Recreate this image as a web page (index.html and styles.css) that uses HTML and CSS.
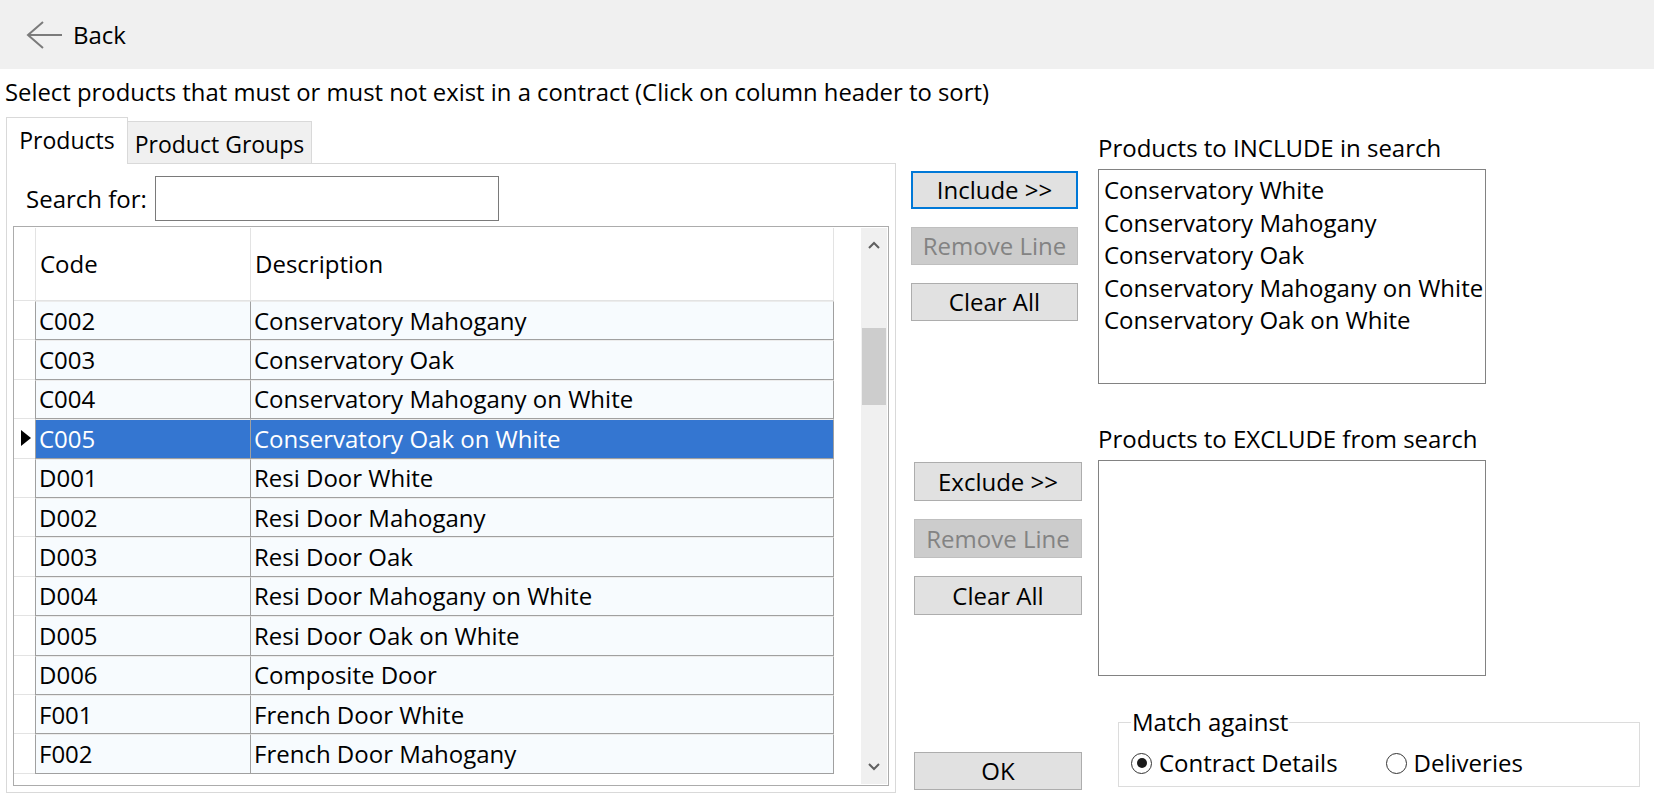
FILE: index.html
```html
<!DOCTYPE html>
<html lang="en">
<head>
<meta charset="utf-8">
<title>Product filter</title>
<link rel="stylesheet" href="styles.css">
</head>
<body>
<header class="topbar">
  <div class="back">
    <svg class="back-icon" width="40" height="30" viewBox="0 0 40 30"><path d="M2 15H36M17 2L2 15L17 28" fill="none" stroke="#7b7b7b" stroke-width="2"/></svg>
    <span>Back</span>
  </div>
</header>
<p class="intro">Select products that must or must not exist in a contract (Click on column header to sort)</p>
<div class="content">
  <section class="picker">
    <div class="tabs">
      <div class="tab active">Products</div>
      <div class="tab">Product Groups</div>
    </div>
    <div class="panel">
      <div class="search">
        <span class="search-label">Search for:</span>
        <div class="input"></div>
      </div>
      <div class="grid">
        <div class="grid-body">
          <div class="row head">
            <div class="rh"></div>
            <div class="hc">Code</div>
            <div class="hc last">Description</div>
          </div>
          <div class="row"><div class="rh"></div><div class="c">C002</div><div class="c last">Conservatory Mahogany</div></div>
          <div class="row"><div class="rh"></div><div class="c">C003</div><div class="c last">Conservatory Oak</div></div>
          <div class="row"><div class="rh"></div><div class="c">C004</div><div class="c last">Conservatory Mahogany on White</div></div>
          <div class="row selected"><div class="rh"><svg width="10" height="16" viewBox="0 0 10 16"><path d="M0 0L10 8L0 16Z" fill="#000"/></svg></div><div class="c">C005</div><div class="c last">Conservatory Oak on White</div></div>
          <div class="row"><div class="rh"></div><div class="c">D001</div><div class="c last">Resi Door White</div></div>
          <div class="row"><div class="rh"></div><div class="c">D002</div><div class="c last">Resi Door Mahogany</div></div>
          <div class="row"><div class="rh"></div><div class="c">D003</div><div class="c last">Resi Door Oak</div></div>
          <div class="row"><div class="rh"></div><div class="c">D004</div><div class="c last">Resi Door Mahogany on White</div></div>
          <div class="row"><div class="rh"></div><div class="c">D005</div><div class="c last">Resi Door Oak on White</div></div>
          <div class="row"><div class="rh"></div><div class="c">D006</div><div class="c last">Composite Door</div></div>
          <div class="row"><div class="rh"></div><div class="c">F001</div><div class="c last">French Door White</div></div>
          <div class="row"><div class="rh"></div><div class="c">F002</div><div class="c last">French Door Mahogany</div></div>
        </div>
        <div class="vscroll">
          <div class="sbtn"><svg width="12" height="8" viewBox="0 0 12 8"><path d="M1 7L6 2L11 7" fill="none" stroke="#606060" stroke-width="2"/></svg></div>
          <div class="thumb"></div>
          <div class="sbtn down"><svg width="12" height="8" viewBox="0 0 12 8"><path d="M1 1L6 6L11 1" fill="none" stroke="#606060" stroke-width="2"/></svg></div>
        </div>
      </div>
    </div>
  </section>

  <section class="side">
    <div class="xfer include">
      <div class="btns">
        <div class="btn focused">Include &gt;&gt;</div>
        <div class="btn disabled">Remove Line</div>
        <div class="btn">Clear All</div>
      </div>
      <div class="listcol">
        <div class="caption">Products to INCLUDE in search</div>
        <div class="listbox">
          <div class="item">Conservatory White</div>
          <div class="item">Conservatory Mahogany</div>
          <div class="item">Conservatory Oak</div>
          <div class="item">Conservatory Mahogany on White</div>
          <div class="item">Conservatory Oak on White</div>
        </div>
      </div>
    </div>

    <div class="xfer exclude">
      <div class="btns">
        <div class="btn">Exclude &gt;&gt;</div>
        <div class="btn disabled">Remove Line</div>
        <div class="btn">Clear All</div>
      </div>
      <div class="listcol">
        <div class="caption">Products to EXCLUDE from search</div>
        <div class="listbox"></div>
      </div>
    </div>

    <div class="footer">
      <div class="btn ok">OK</div>
      <fieldset class="match">
        <legend>Match against</legend>
        <div class="radios">
          <span class="radio"><span class="dot checked"></span>Contract Details</span>
          <span class="radio"><span class="dot"></span>Deliveries</span>
        </div>
      </fieldset>
    </div>
  </section>
</div>
</body>
</html>
```

FILE: styles.css
```css
html, body {
  margin: 0;
  padding: 0;
  background: #ffffff;
}

body {
  font-family: "Open Sans", "Noto Sans", sans-serif;
  font-size: 24px;
  color: #000;
  width: 1654px;
  height: 807px;
  overflow: hidden;
}

/* top bar */
.topbar {
  height: 69px;
  background: #f0f0f0;
  display: flex;
  align-items: center;
  padding-left: 26px;
  box-sizing: border-box;
}

.back {
  display: flex;
  align-items: center;
  gap: 7px;
  font-size: 24px;
}

.back-icon {
  display: block;
}

.intro {
  margin: 8px 0 0 5px;
  line-height: 30px;
  font-size: 23.85px;
  white-space: nowrap;
}

.content {
  display: flex;
  align-items: flex-start;
  margin-top: 10px;
}

/* left picker */
.picker {
  margin-left: 6px;
  width: 890px;
  flex: none;
}

.tabs {
  display: flex;
  align-items: flex-end;
  height: 46px;
  font-size: 23px;
}

.tab {
  box-sizing: border-box;
  border: 1px solid #d9d9d9;
  border-bottom: none;
  display: flex;
  align-items: center;
  justify-content: center;
  line-height: 30px;
  white-space: nowrap;
}

.tab.active {
  width: 122px;
  height: 47px;
  margin-bottom: -1px;
  background: #fff;
  position: relative;
  padding-bottom: 3px;
}

.tab:not(.active) {
  width: 184px;
  height: 42px;
  background: #f0f0f0;
  border-left: none;
  padding-top: 2px;
}

.panel {
  box-sizing: border-box;
  height: 630px;
  border: 1px solid #d9d9d9;
  background: #fff;
}

.search {
  display: grid;
  grid-template-columns: 129px 344px;
  align-items: center;
  margin-top: 12px;
  padding-left: 19px;
  height: 45px;
}

.search-label {
  white-space: nowrap;
}

.input {
  box-sizing: border-box;
  height: 45px;
  border: 1px solid #7a7a7a;
  background: #fff;
}

/* data grid */
.grid {
  box-sizing: border-box;
  margin: 5px 0 0 6px;
  width: 876px;
  height: 560px;
  border: 1px solid #acacac;
  display: flex;
  padding: 1px 1px 1px 0;
  background: #fff;
}

.grid-body {
  width: 847px;
  flex: none;
}

.row {
  display: grid;
  grid-template-columns: 21px 215px 584px;
  height: 39.4px;
}

.row.head {
  height: 73px;
}

.rh {
  box-sizing: border-box;
  border-bottom: 1px solid #e3e3e3;
  display: flex;
  align-items: center;
  justify-content: center;
  padding-left: 2px;
}

.hc {
  box-sizing: border-box;
  border-left: 1px solid #e3e3e3;
  border-bottom: 1px solid #e3e3e3;
  padding-left: 4px;
  display: flex;
  align-items: center;
  line-height: 30px;
  white-space: nowrap;
}

.hc.last {
  padding-left: 4px;
  border-right: 1px solid #e3e3e3;
}

.c {
  box-sizing: border-box;
  background: #f7fbfe;
  border-top: 1px solid #ececec;
  border-left: 1px solid #a0a0a0;
  border-bottom: 1px solid #a0a0a0;
  padding-left: 3px;
  display: flex;
  align-items: center;
  line-height: 30px;
  white-space: nowrap;
}

.c.last {
  padding-left: 3px;
  border-right: 1px solid #a0a0a0;
}

.row.selected .c {
  background: #3476d1;
  color: #fff;
}

.vscroll {
  width: 26px;
  flex: none;
  background: #f0f0f0;
  display: flex;
  flex-direction: column;
  align-items: center;
}

.sbtn {
  height: 34px;
  width: 26px;
  display: flex;
  align-items: center;
  justify-content: center;
}

.sbtn.down {
  margin-top: auto;
}

.thumb {
  margin-top: 66px;
  width: 24px;
  height: 77px;
  background: #cdcdcd;
}

/* right side */
.side {
  display: flex;
  flex-direction: column;
  flex: none;
}

.xfer {
  display: flex;
  align-items: flex-start;
}

.btns {
  display: flex;
  flex-direction: column;
  gap: 18px;
}

.include .btns {
  margin: 54px 0 0 15px;
  width: 167px;
}

.exclude .btns {
  margin: 78px 0 0 18px;
  width: 168px;
}

.btn {
  box-sizing: border-box;
  height: 38px;
  background: #e1e1e1;
  border: 1px solid #adadad;
  display: flex;
  align-items: center;
  justify-content: center;
  line-height: 30px;
  white-space: nowrap;
}

.exclude .btn {
  height: 39px;
}

.btn.focused {
  border: 2px solid #0078d7;
}

.btn.disabled {
  background: #cccccc;
  border-color: #bfbfbf;
  color: #838383;
}

.listcol {
  width: 388px;
}

.include .listcol {
  margin-left: 20px;
}

.exclude .listcol {
  margin-left: 16px;
}

.caption {
  line-height: 30px;
  white-space: nowrap;
}

.include .caption {
  margin-top: 16px;
}

.exclude .caption {
  margin-top: 40px;
}

.listbox {
  box-sizing: border-box;
  margin-top: 6px;
  border: 1px solid #828282;
  background: #fff;
  padding: 4px 0 0 5px;
  overflow: hidden;
}

.include .listbox {
  height: 215px;
}

.exclude .listbox {
  height: 216px;
}

.item {
  line-height: 32.5px;
  white-space: nowrap;
}

.footer {
  display: flex;
  align-items: flex-start;
}

.btn.ok {
  margin: 76px 0 0 18px;
  width: 168px;
}

.match {
  box-sizing: border-box;
  margin: 33px 0 0 36px;
  width: 522px;
  min-width: 0;
  padding: 0 12px 8px 12px;
  border: 1px solid #dcdcdc;
}

.match legend {
  padding: 0 1px;
  line-height: 26px;
}

.radios {
  display: flex;
  align-items: center;
  gap: 48px;
  margin-top: 13px;
  line-height: 30px;
}

.radio {
  display: inline-flex;
  align-items: center;
  gap: 7px;
  white-space: nowrap;
}

.dot {
  box-sizing: border-box;
  width: 21px;
  height: 21px;
  border: 1.5px solid #333;
  border-radius: 50%;
  display: inline-flex;
  align-items: center;
  justify-content: center;
  background: #fff;
}

.dot.checked::after {
  content: "";
  width: 10px;
  height: 10px;
  border-radius: 50%;
  background: #1a1a1a;
}
```
